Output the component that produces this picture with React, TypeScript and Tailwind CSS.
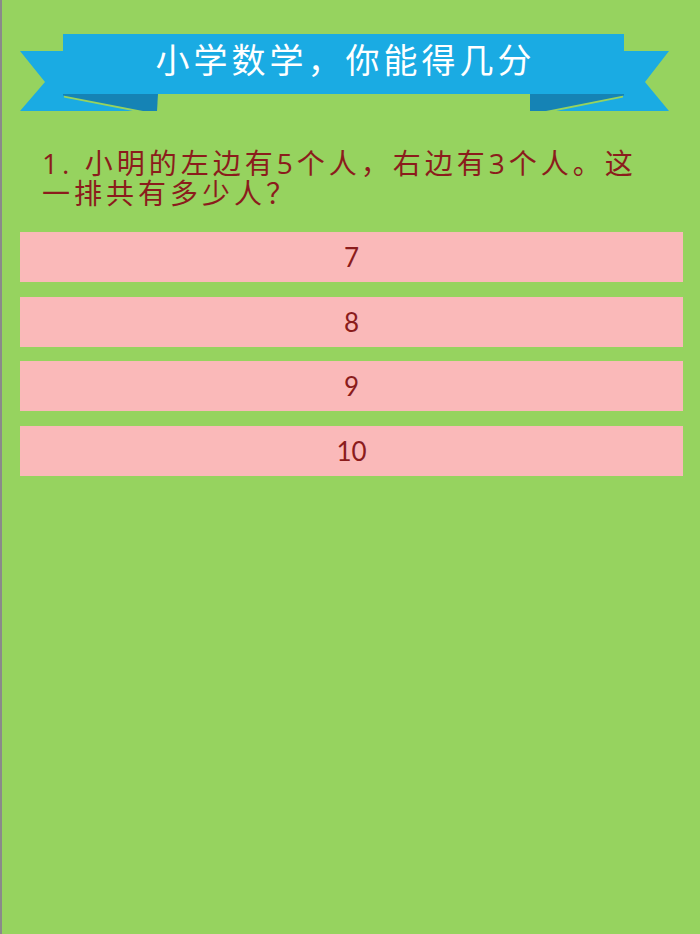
import React from "react";

// ---------------------------------------------------------------------------
// Data
// ---------------------------------------------------------------------------

const QUESTION = "1. 小明的左边有5个人，右边有3个人。这一排共有多少人？";
const OPTIONS = ["7", "8", "9", "10"];

// ---------------------------------------------------------------------------
// Ribbon tails + folds (drawn in page coordinates)
// ---------------------------------------------------------------------------

function RibbonTails() {
  return (
    <svg
      aria-hidden="true"
      className="absolute inset-0 h-full w-full"
      viewBox="2 34 698 77"
      preserveAspectRatio="none"
    >
      {/* left tail */}
      <polygon points="20,51 64,51 64,97.6 133,111 20,111 45,82" fill="#1aabe3" />
      <polygon points="63,94 158,94 157,111 143,111 63,95.6" fill="#1583b5" />
      {/* right tail */}
      <polygon points="669,51 623,51 623,97.6 556,111 669,111 645,82" fill="#1aabe3" />
      <polygon points="624,94 530,94 530,111 546,111 624,95.6" fill="#1583b5" />
    </svg>
  );
}

function Banner({ title }: { title: string }) {
  return (
    <div className="relative mt-[34px] h-[77px]">
      <RibbonTails />
      <div className="relative ml-[61px] flex h-[60px] w-[561px] items-center justify-center bg-[#1aabe3] pb-[8px] pl-[4px]">
        <h1 className="text-[34px] leading-none font-normal tracking-[4px] text-white">
          {title}
        </h1>
      </div>
    </div>
  );
}

// ---------------------------------------------------------------------------
// Page
// ---------------------------------------------------------------------------

export default function App() {
  return (
    <div className="flex h-[934px] w-[700px] flex-col overflow-hidden border-l-2 border-[#8a8a8a] bg-[#96d35f] font-['Open_Sans','Noto_Sans_CJK_SC',sans-serif]">
      <Banner title="小学数学，你能得几分" />

      <p className="mt-[37px] pl-[40px] pr-[42px] text-[28px] leading-[30px] tracking-[4px] text-[#8b1c1c]">
        {QUESTION}
      </p>

      <div className="mt-[24px] ml-[18px] flex w-[663px] flex-col gap-[14.6px]">
        {OPTIONS.map((opt) => (
          <button
            key={opt}
            type="button"
            className="flex h-[50px] items-center justify-center bg-[#fab9b9] font-['Lato','Open_Sans',sans-serif] text-[26px] leading-none text-[#8b1c1c]"
          >
            {opt}
          </button>
        ))}
      </div>
    </div>
  );
}
